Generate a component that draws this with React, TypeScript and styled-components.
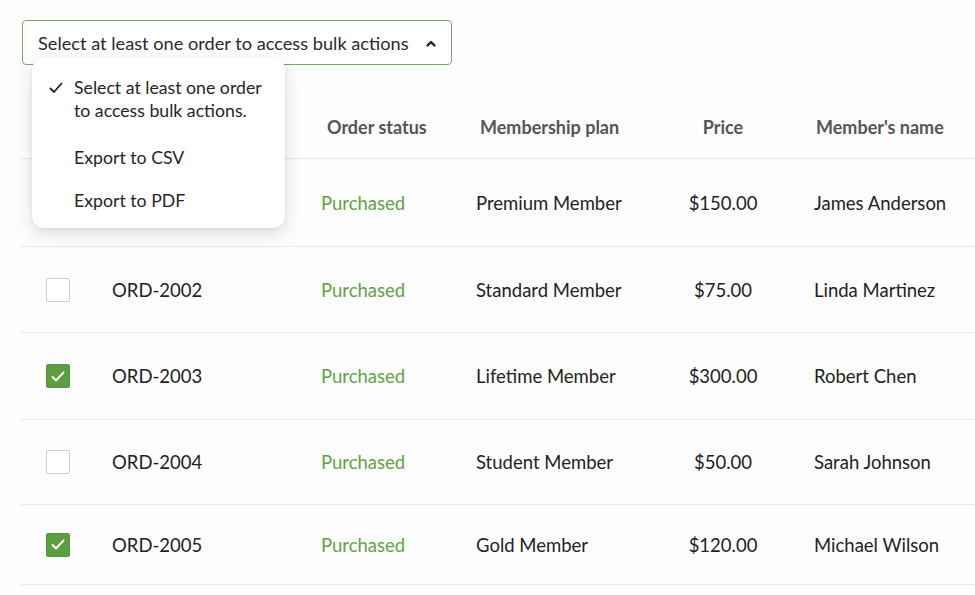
import styled, { createGlobalStyle } from 'styled-components';

const GlobalStyle = createGlobalStyle`
  html, body {
    margin: 0;
    padding: 0;
    background: #fdfdfd;
    overflow: hidden;
  }
  body {
    font-family: Lato, "Open Sans", "Liberation Sans", sans-serif;
    color: #1f1f1f;
  }
`;

const Page = styled.div`
  width: 975px;
  height: 595px;
  padding: 20px 0 0 21px;
  box-sizing: border-box;
  overflow: hidden;
`;

const BulkWrap = styled.div`
  position: relative;
  margin-left: 1px;
  width: 430px;
  z-index: 2;
`;

const BulkButton = styled.button`
  display: flex;
  align-items: center;
  justify-content: space-between;
  width: 430px;
  height: 45px;
  padding: 0 14px 0 15px;
  box-sizing: border-box;
  background: #fff;
  border: 1.5px solid #74ad5e;
  border-radius: 4px;
  font-family: inherit;
  font-size: 18.2px;
  color: #2a2a2a;
  cursor: pointer;
`;

const Menu = styled.div`
  position: absolute;
  top: 38px;
  left: 10px;
  width: 253px;
  padding: 18px 0 16px;
  box-sizing: border-box;
  background: #fff;
  border-radius: 12px;
  box-shadow: 0 6px 18px rgba(0, 0, 0, 0.13), 0 1px 4px rgba(0, 0, 0, 0.06);
`;

const MenuItem = styled.div<{ $gap?: number }>`
  display: flex;
  align-items: flex-start;
  padding: 0 10px 0 17px;
  margin-top: ${(p) => p.$gap ?? 0}px;
  font-size: 17.7px;
  line-height: 23px;
  color: #262626;
  white-space: nowrap;
`;

const CheckSlot = styled.span`
  flex: 0 0 25px;
  display: flex;
  align-items: center;
  height: 23px;
`;

const Table = styled.div`
  margin-top: 30px;
  width: 1000px;
`;

const Row = styled.div<{ $h: number; $header?: boolean }>`
  display: grid;
  grid-template-columns: 91px 209px 155px 174px 146px 1fr;
  align-items: center;
  height: ${(p) => p.$h}px;
  border-bottom: 1.5px solid #e9e9e9;
  box-sizing: border-box;
  font-size: ${(p) => (p.$header ? '18px' : '18.5px')};
  font-weight: ${(p) => (p.$header ? 700 : 400)};
  color: ${(p) => (p.$header ? '#555' : '#222')};
`;

const Cell = styled.div<{ $center?: boolean; $pad?: number; $green?: boolean }>`
  padding-left: ${(p) => p.$pad ?? 0}px;
  text-align: ${(p) => (p.$center ? 'center' : 'left')};
  color: ${(p) => (p.$green ? '#5da444' : 'inherit')};
  white-space: nowrap;
`;

const Box = styled.span<{ $on: boolean }>`
  display: flex;
  align-items: center;
  justify-content: center;
  width: 24px;
  height: 24px;
  margin-left: 25px;
  box-sizing: border-box;
  border-radius: 2px;
  background: ${(p) => (p.$on ? '#5c9e3f' : '#fff')};
  border: ${(p) => (p.$on ? '1px solid #579a3a' : '1.5px solid #cdcdcd')};
`;

const Chevron = () => (
  <svg width="12" height="8" viewBox="0 0 12 8" aria-hidden="true">
    <polyline points="2.5,6.5 6,3 9.5,6.5" fill="none" stroke="#222" strokeWidth="2.4" strokeLinecap="round" strokeLinejoin="round" />
  </svg>
);

const Tick = () => (
  <svg width="14" height="12" viewBox="0 0 14 12" aria-hidden="true">
    <polyline points="1.5,6.5 5,10 12.5,1.5" fill="none" stroke="#222" strokeWidth="1.8" strokeLinecap="round" strokeLinejoin="round" />
  </svg>
);

const BoxTick = () => (
  <svg width="16" height="13" viewBox="0 0 16 13" aria-hidden="true">
    <polyline points="2.5,7 6,10.5 13.5,2.5" fill="none" stroke="#fff" strokeWidth="1.9" strokeLinecap="round" strokeLinejoin="round" />
  </svg>
);

const Checkbox = ({ on }: { on: boolean }) => <Box $on={on}>{on && <BoxTick />}</Box>;

// first row and the first header cells sit under the open menu, so they are left empty
const orders = [
  { id: '', plan: 'Premium Member', price: '$150.00', name: 'James Anderson', on: false, h: 88 },
  { id: 'ORD-2002', plan: 'Standard Member', price: '$75.00', name: 'Linda Martinez', on: false, h: 86 },
  { id: 'ORD-2003', plan: 'Lifetime Member', price: '$300.00', name: 'Robert Chen', on: true, h: 87 },
  { id: 'ORD-2004', plan: 'Student Member', price: '$50.00', name: 'Sarah Johnson', on: false, h: 85 },
  { id: 'ORD-2005', plan: 'Gold Member', price: '$120.00', name: 'Michael Wilson', on: true, h: 80 },
];

export default function App() {
  return (
    <>
      <GlobalStyle />
      <Page>
        <BulkWrap>
          <BulkButton>
            Select at least one order to access bulk actions
            <Chevron />
          </BulkButton>
          <Menu>
            <MenuItem>
              <CheckSlot>
                <Tick />
              </CheckSlot>
              <span>
                Select at least one order
                <br />
                to access bulk actions.
              </span>
            </MenuItem>
            <MenuItem $gap={24}>
              <CheckSlot />
              Export to CSV
            </MenuItem>
            <MenuItem $gap={20}>
              <CheckSlot />
              Export to PDF
            </MenuItem>
          </Menu>
        </BulkWrap>

        <Table>
          <Row $h={64} $header>
            <span />
            <Cell />
            <Cell $pad={6}>Order status</Cell>
            <Cell $pad={4}>Membership plan</Cell>
            <Cell $center>Price</Cell>
            <Cell $pad={20}>Member's name</Cell>
          </Row>
          {orders.map((o, i) => (
            <Row key={i} $h={o.h}>
              {o.id ? <Checkbox on={o.on} /> : <span />}
              <Cell>{o.id}</Cell>
              <Cell $green>Purchased</Cell>
              <Cell>{o.plan}</Cell>
              <Cell $center>{o.price}</Cell>
              <Cell $pad={18}>{o.name}</Cell>
            </Row>
          ))}
        </Table>
      </Page>
    </>
  );
}
